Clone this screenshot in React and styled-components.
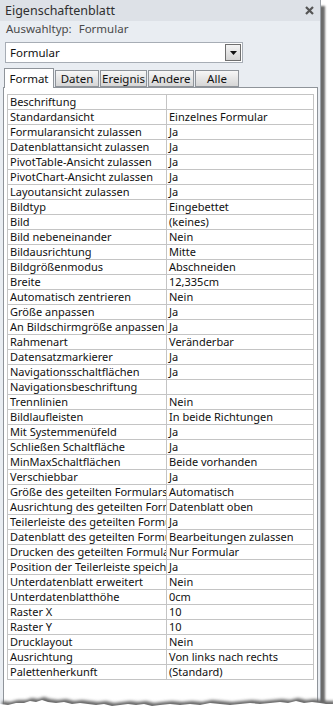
import React from "react";
import styled, { createGlobalStyle } from "styled-components";

const rows = [
  ["Beschriftung", ""],
  ["Standardansicht", "Einzelnes Formular"],
  ["Formularansicht zulassen", "Ja"],
  ["Datenblattansicht zulassen", "Ja"],
  ["PivotTable-Ansicht zulassen", "Ja"],
  ["PivotChart-Ansicht zulassen", "Ja"],
  ["Layoutansicht zulassen", "Ja"],
  ["Bildtyp", "Eingebettet"],
  ["Bild", "(keines)"],
  ["Bild nebeneinander", "Nein"],
  ["Bildausrichtung", "Mitte"],
  ["Bildgrößenmodus", "Abschneiden"],
  ["Breite", "12,335cm"],
  ["Automatisch zentrieren", "Nein"],
  ["Größe anpassen", "Ja"],
  ["An Bildschirmgröße anpassen", "Ja"],
  ["Rahmenart", "Veränderbar"],
  ["Datensatzmarkierer", "Ja"],
  ["Navigationsschaltflächen", "Ja"],
  ["Navigationsbeschriftung", ""],
  ["Trennlinien", "Nein"],
  ["Bildlaufleisten", "In beide Richtungen"],
  ["Mit Systemmenüfeld", "Ja"],
  ["Schließen Schaltfläche", "Ja"],
  ["MinMaxSchaltflächen", "Beide vorhanden"],
  ["Verschiebbar", "Ja"],
  ["Größe des geteilten Formulars", "Automatisch"],
  ["Ausrichtung des geteilten Formulars", "Datenblatt oben"],
  ["Teilerleiste des geteilten Formulars", "Ja"],
  ["Datenblatt des geteilten Formulars", "Bearbeitungen zulassen"],
  ["Drucken des geteilten Formulars", "Nur Formular"],
  ["Position der Teilerleiste speichern", "Ja"],
  ["Unterdatenblatt erweitert", "Nein"],
  ["Unterdatenblatthöhe", "0cm"],
  ["Raster X", "10"],
  ["Raster Y", "10"],
  ["Drucklayout", "Nein"],
  ["Ausrichtung", "Von links nach rechts"],
  ["Palettenherkunft", "(Standard)"],
];

const tabs = [
  { label: "Format", width: 50, active: true },
  { label: "Daten", width: 44 },
  { label: "Ereignis", width: 47 },
  { label: "Andere", width: 46 },
  { label: "Alle", width: 44 },
];

const GlobalStyle = createGlobalStyle`
  body {
    margin: 0;
    background: #fff;
    font-family: "Noto Sans", "Liberation Sans", sans-serif;
  }
`;

const Frame = styled.div`
  position: relative;
  width: 333px;
  height: 719px;
  overflow: hidden;
  background: #fff;
`;

const Panel = styled.div`
  width: 320px;
  height: 706px;
  background: #e9edf2;
  border-right: 1px solid #9aa0a7;
  box-shadow: 4px 6px 2px rgba(70, 70, 70, 0.8);
  display: flex;
  flex-direction: column;
`;

const TitleBar = styled.div`
  height: 21px;
  background: #dde1e7;
  display: flex;
  align-items: center;
  justify-content: space-between;
  padding: 0 6px 0 5px;
  font-size: 12.5px;
  color: #2f2f2f;
`;

const SelectionType = styled.div`
  height: 21px;
  padding-left: 6px;
  font-size: 11.5px;
  color: #4a4a4a;
  line-height: 15px;
  word-spacing: 4px;
`;

const Select = styled.div`
  margin-left: 5px;
  width: 232px;
  height: 19px;
  background: #fff;
  border: 1px solid #a7adb5;
  display: flex;
  align-items: center;
  justify-content: space-between;
  padding-left: 4px;
  font-size: 11.5px;
  color: #111;
`;

const SelectButton = styled.div`
  width: 14px;
  height: 15px;
  margin-right: 1px;
  border: 1px solid #6f6f6f;
  background: linear-gradient(#f4f4f4, #d4d4d4);
  display: flex;
  align-items: center;
  justify-content: center;
`;

const TabBar = styled.div`
  display: flex;
  align-items: flex-end;
  gap: 1px;
  margin: 4px 0 0 4px;
  height: 20px;
  position: relative;
  z-index: 1;
`;

const Tab = styled.div`
  width: ${(p) => p.$width}px;
  height: ${(p) => (p.$active ? 20 : 17)}px;
  box-sizing: border-box;
  border: 1px solid #8f949a;
  border-bottom: ${(p) => (p.$active ? "none" : "1px solid #8f949a")};
  background: ${(p) =>
    p.$active ? "#fff" : "linear-gradient(#f7f7f7, #e6e6e6 50%, #d6d6d6)"};
  font-size: 11.5px;
  color: #111;
  display: flex;
  justify-content: center;
  align-items: ${(p) => (p.$active ? "flex-start" : "center")};
  padding-top: ${(p) => (p.$active ? 2 : 0)}px;
  margin-bottom: ${(p) => (p.$active ? -1 : 0)}px;
`;

const Content = styled.div`
  flex: 1;
  margin: 0 2px 0 3px;
  background: #fff;
  border: 1px solid #8f949a;
  border-bottom: none;
  padding: 6px 3px 0 3px;
`;

const Grid = styled.div`
  display: grid;
  grid-template-columns: 159px 1fr;
  border-top: 1px solid #c4c4c4;
  border-left: 1px solid #c4c4c4;
`;

const Cell = styled.div`
  height: 14px;
  line-height: 14px;
  border-right: 1px solid #c4c4c4;
  border-bottom: 1px solid #c4c4c4;
  padding-left: 2px;
  font-size: 11px;
  color: #111;
  white-space: nowrap;
  overflow: hidden;
  text-overflow: clip;
`;

const Tear = styled.svg`
  position: absolute;
  left: 0;
  top: 680px;
`;

function CloseIcon() {
  return (
    <svg width="9" height="9" viewBox="0 0 9 9">
      <path d="M1 1 L8 8 M8 1 L1 8" stroke="#555" strokeWidth="2.2" />
    </svg>
  );
}

function Arrow() {
  return (
    <svg width="7" height="4" viewBox="0 0 7 4">
      <path d="M0 0 H7 L3.5 4 Z" fill="#111" />
    </svg>
  );
}

const edge =
  "0,19 8,20 16,18 24,18 30,16 36,17 42,15 48,17 56,18 64,17 72,19 80,18 88,19 96,20 104,19 112,21 120,20 128,19 136,20 144,19 152,21 160,20 170,19 180,20 190,19 200,20 210,18 220,19 230,20 240,19 250,18 260,19 270,18 280,17 288,18 296,16 304,18 312,17 320,18 326,19 333,19";

function TornEdge() {
  return (
    <Tear width="333" height="39" viewBox="0 0 333 39">
      <defs>
        <filter id="blur" x="-10%" y="-50%" width="120%" height="200%">
          <feGaussianBlur stdDeviation="1.6" />
        </filter>
      </defs>
      <polygon
        points={`${edge} 333,39 0,39`}
        fill="#6b6b6b"
        filter="url(#blur)"
        transform="translate(2,2)"
      />
      <polygon points={`${edge} 333,39 0,39`} fill="#fff" transform="translate(0,5)" />
    </Tear>
  );
}

export default function App() {
  return (
    <Frame>
      <GlobalStyle />
      <Panel>
        <TitleBar>
          <span>Eigenschaftenblatt</span>
          <CloseIcon />
        </TitleBar>
        <SelectionType>Auswahltyp: Formular</SelectionType>
        <Select>
          <span>Formular</span>
          <SelectButton>
            <Arrow />
          </SelectButton>
        </Select>
        <TabBar>
          {tabs.map((t) => (
            <Tab key={t.label} $width={t.width} $active={t.active}>
              {t.label}
            </Tab>
          ))}
        </TabBar>
        <Content>
          <Grid>
            {rows.map(([k, v]) => (
              <React.Fragment key={k}>
                <Cell>{k}</Cell>
                <Cell>{v}</Cell>
              </React.Fragment>
            ))}
          </Grid>
        </Content>
      </Panel>
      <TornEdge />
    </Frame>
  );
}
